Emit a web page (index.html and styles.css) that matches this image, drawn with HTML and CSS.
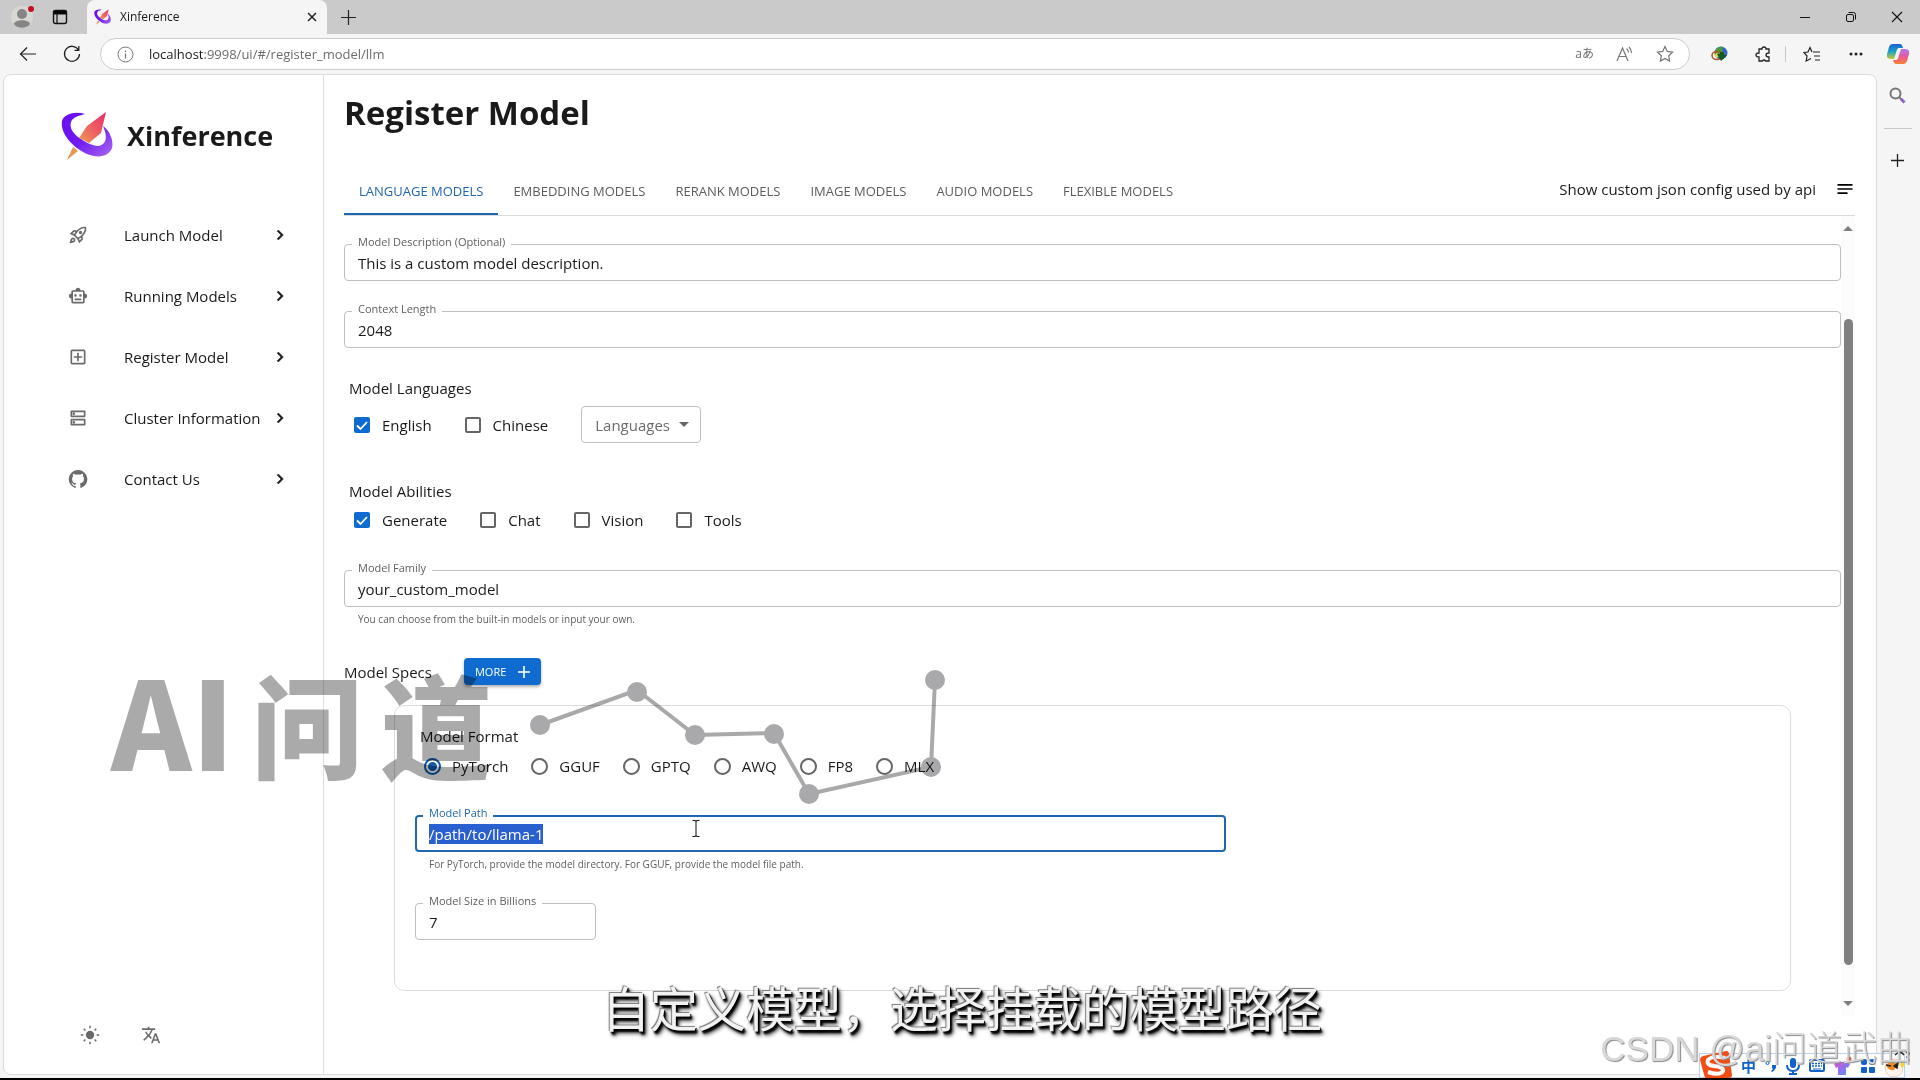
FILE: index.html
```html
<!DOCTYPE html>
<html lang="en">
<head>
<meta charset="utf-8">
<meta name="viewport" content="width=device-width, initial-scale=1">
<title>Xinference</title>
<link rel="stylesheet" href="styles.css">
</head>
<body>
<svg class="defs" width="0" height="0" aria-hidden="true">
  <defs>
    <linearGradient id="ring" x1="0" y1="0" x2="1" y2="1"><stop offset="0" stop-color="#6a0cf0"/><stop offset=".5" stop-color="#6f1af0"/><stop offset="1" stop-color="#a866f0"/></linearGradient>
    <linearGradient id="needle" x1="1" y1="0" x2="0" y2="1"><stop offset="0" stop-color="#e92a68"/><stop offset=".6" stop-color="#ee6a62"/><stop offset="1" stop-color="#eba04c"/></linearGradient>
    <linearGradient id="copA" x1="0" y1="0" x2="0" y2="1"><stop offset="0" stop-color="#1b5fd0"/><stop offset=".5" stop-color="#1ba3c8"/><stop offset="1" stop-color="#c9c92e"/></linearGradient>
    <linearGradient id="copB" x1="0" y1="0" x2="0" y2="1"><stop offset="0" stop-color="#b07af0"/><stop offset=".5" stop-color="#e85a9c"/><stop offset="1" stop-color="#f8812c"/></linearGradient>
    <linearGradient id="shirt" x1="0" y1="0" x2="1" y2="1"><stop offset="0" stop-color="#e458b4"/><stop offset=".5" stop-color="#9a6cf0"/><stop offset="1" stop-color="#4aa0f8"/></linearGradient>
    <symbol id="logo" viewBox="0 0 52 48">
      <path d="M24 2C14-1 3 2 1 9c-2 12 10 26 25 33 12 5 22 2 25-6 2-8-3-18-9-22 3 7 4 13 1 17-4 5-12 3-20-2C13 23 8 17 10 10c2-5 7-6 14-8z" fill="url(#ring)"/>
      <path d="M45 0 40 21 28 31 18 26 26 14z" fill="url(#needle)"/>
      <path d="M12 35l5 4-11 9z" fill="#e69a50"/>
    </symbol>
    <symbol id="chev" viewBox="0 0 24 24"><path fill="currentColor" stroke="currentColor" stroke-width=".6" d="M10 6 8.59 7.41 13.17 12l-4.58 4.59L10 18l6-6z"/></symbol>
  </defs>
</svg>

<header class="tabstrip">
  <svg class="avatar" viewBox="0 0 24 24" width="24" height="24" aria-hidden="true"><circle cx="11" cy="12" r="11" fill="#d9d7d3"/><circle cx="11" cy="9" r="5" fill="#858585"/><path d="M3 19c1-5 15-5 16 0-3 5-13 5-16 0z" fill="#858585"/><circle cx="20" cy="4" r="3" fill="#c50f1f"/></svg>
  <svg class="workspaces" viewBox="0 0 16 16" width="16" height="16" aria-hidden="true"><rect x="1.5" y="1.5" width="13" height="13" rx="2" fill="none" stroke="#111" stroke-width="1.4"/><path d="M2 2h12v3H2zM5 5v9" stroke="#111" stroke-width="1.2"/></svg>
  <div class="tab">
    <svg width="17" height="16" aria-hidden="true"><use href="#logo"/></svg>
    <span class="tab-name">Xinference</span>
    <button class="plain" aria-label="Close tab"><svg width="10" height="10" viewBox="0 0 10 10"><path d="M1 1l8 8M9 1L1 9" stroke="#222" stroke-width="1.5"/></svg></button>
  </div>
  <button class="plain newtab" aria-label="New tab"><svg width="15" height="15" viewBox="0 0 15 15"><path d="M7.5 0v15M0 7.5h15" stroke="#222" stroke-width="1.2"/></svg></button>
  <div class="winbtns">
    <button class="plain" aria-label="Minimize"><svg width="12" height="12" viewBox="0 0 12 12"><path d="M1 6.500h10" stroke="#111"/></svg></button>
    <button class="plain" aria-label="Restore"><svg width="12" height="12" viewBox="0 0 12 12" fill="none" stroke="#111"><rect x="1.500" y="3.500" width="7" height="7" rx="1.500"/><path d="M3.500 1.500h5a2 2 0 0 1 2 2v5"/></svg></button>
    <button class="plain" aria-label="Close"><svg width="12" height="12" viewBox="0 0 12 12"><path d="M1 1l10 10M11 1L1 11" stroke="#111" stroke-width="1.1"/></svg></button>
  </div>
</header>

<div class="toolbar">
  <button class="plain" aria-label="Back"><svg width="18" height="16" viewBox="0 0 18 16" fill="none" stroke="#222" stroke-width="1.2"><path d="M17 8H1.500M8 1.500L1.500 8 8 14.500"/></svg></button>
  <button class="plain" aria-label="Refresh"><svg width="18" height="18" viewBox="0 0 18 18" fill="none" stroke="#222" stroke-width="1.300"><path d="M15.500 5A7.500 7.500 0 1 0 16.500 9M15.800 1v4.300h-4.300"/></svg></button>
  <div class="address">
    <svg width="17" height="17" viewBox="0 0 17 17" fill="none" stroke="#757575" aria-hidden="true"><circle cx="8.500" cy="8.500" r="7.500"/><path d="M8.500 7.500v5M8.500 4.500v1.500" stroke-width="1.200"/></svg>
    <span class="url"><b>localhost</b>:9998/ui/#/register_model/llm</span>
    <span class="translate-ico">aあ</span>
    <svg class="read" width="18" height="16" viewBox="0 0 18 16" fill="none" stroke="#757575" stroke-width="1.200" aria-hidden="true"><path d="M1 15L6.500 2 12 15M3 10.500h7M10.500 2.500a6 6 0 0 1 2 4M13 1a8 8 0 0 1 2.500 6"/></svg>
    <svg width="18" height="18" viewBox="0 0 18 18" fill="none" stroke="#757575" stroke-width="1.200" aria-hidden="true"><path d="M9 1.500l2.300 4.900 5.200.7-3.800 3.700.9 5.300L9 13.500l-4.600 2.600.9-5.300L1.500 7.100l5.200-.7z"/></svg>
  </div>
  <div class="tools">
    <svg width="17" height="16" viewBox="0 0 17 16" aria-hidden="true"><circle cx="10" cy="7" r="6.500" fill="#3468c0"/><path d="M4 5q2-5 8-4l-1 4 3 2-3 3-7-1z" fill="#4a9b3c"/><ellipse cx="6" cy="9.500" rx="5" ry="4" fill="none" stroke="#b95022" stroke-width="1.500"/><path d="M3 9l3-2 3 2-3 3z" fill="#e5d64a"/><path d="M6 8h3V6h4v3h3l-6 6z" fill="#145a20"/></svg>
    <svg width="16" height="17" viewBox="0 0 16 17" fill="none" stroke="#222" stroke-width="1.300" aria-hidden="true"><path d="M4 3h3q0-2 2-2t2 2h3v4q-3 0-3 2t3 2v4h-3.500q-.5-1-1.500-1t-1.500 1H4v-4Q1 11 1 9t3-2z"/></svg>
    <span class="vline"></span>
    <svg width="17" height="17" viewBox="0 0 17 17" fill="none" stroke="#222" stroke-width="1.200" aria-hidden="true"><path d="M10 6h7M11 10h6M12 14h5M9 6L7 1.500 5 6 1 6.500l3 3.500-.8 5L8 12.500"/></svg>
    <svg width="14" height="4" viewBox="0 0 14 4" fill="#222" aria-hidden="true"><circle cx="2" cy="2" r="1.500"/><circle cx="7" cy="2" r="1.500"/><circle cx="12" cy="2" r="1.500"/></svg>
    <svg width="22" height="20" viewBox="0 0 22 20" aria-hidden="true"><path d="M6 0h7q2 0 3 4l-4 0q-2 0-3 5l-2 6H4q-5 0-4-5L2 3q1-3 4-3z" fill="url(#copA)"/><path d="M16 20H9q-2 0-3-4l3 0q2 0 3-5l2-6h4q5 0 4 5l-2 7q-1 3-4 3z" fill="url(#copB)"/></svg>
  </div>
</div>

<div class="body">
  <div class="page">
    <nav class="sidebar" aria-label="Main">
      <a class="brand" href="#"><svg width="52" height="48" aria-hidden="true"><use href="#logo"/></svg><span>Xinference</span></a>
      <ul class="menu">
        <li><a href="#launch"><svg class="ico" viewBox="0 0 24 24"><path d="M6 15c-.83 0-1.58.34-2.120.88C2.700 17.060 2 22 2 22s4.940-.7 6.120-1.880A2.996 2.996 0 0 0 6 15zm.71 3.710c-.28.28-2.170.76-2.170.76s.47-1.880.76-2.170c.17-.19.42-.3.7-.3.55 0 1 .45 1 1 0 .28-.11.53-.29.71zm10.710-5.060c6.360-6.360 4.240-11.310 4.240-11.310S16.710.22 10.350 6.580l-2.490-.5c-.65-.13-1.330.08-1.810.55L2 10.690l5 2.140L11.170 17l2.140 5 4.050-4.050c.47-.47.68-1.150.55-1.810l-.49-2.490zM7.410 10.830l-1.910-.82 1.970-1.970 1.440.29c-.57.83-1.080 1.700-1.500 2.500zm6.580 7.670-.82-1.910c.8-.42 1.670-.93 2.490-1.500l.29 1.440-1.960 1.970zM16 12.240c-1.320 1.320-3.380 2.400-4.040 2.730l-2.930-2.930c.32-.65 1.400-2.710 2.730-4.040 4.680-4.680 8.230-3.990 8.230-3.990s.69 3.550-3.990 8.230zM15 11c1.100 0 2-.9 2-2s-.9-2-2-2-2 .9-2 2 .9 2 2 2z"/></svg><span>Launch Model</span><svg class="chev"><use href="#chev"/></svg></a></li>
        <li><a href="#running"><svg class="ico" viewBox="0 0 24 24"><path d="M20 9V7c0-1.100-.9-2-2-2h-3c0-1.660-1.340-3-3-3S9 3.340 9 5H6c-1.100 0-2 .9-2 2v2c-1.660 0-3 1.340-3 3s1.340 3 3 3v4c0 1.100.9 2 2 2h12c1.100 0 2-.9 2-2v-4c1.660 0 3-1.340 3-3s-1.340-3-3-3zm-2 10H6V7h12v12zm-9-6c-.83 0-1.500-.67-1.500-1.500S8.170 10 9 10s1.500.67 1.500 1.500S9.830 13 9 13zm7.500-1.500c0 .83-.67 1.500-1.500 1.500s-1.500-.67-1.500-1.500.67-1.500 1.500-1.500 1.500.67 1.500 1.500zM8 15h8v2H8v-2z"/></svg><span>Running Models</span><svg class="chev"><use href="#chev"/></svg></a></li>
        <li><a href="#register"><svg class="ico" viewBox="0 0 24 24"><path d="M19 3H5c-1.110 0-2 .9-2 2v14c0 1.100.89 2 2 2h14c1.100 0 2-.9 2-2V5c0-1.100-.9-2-2-2zm0 16H5V5h14v14zm-8-2h2v-4h4v-2h-4V7h-2v4H7v2h4z"/></svg><span>Register Model</span><svg class="chev"><use href="#chev"/></svg></a></li>
        <li><a href="#cluster"><svg class="ico" viewBox="0 0 24 24"><path d="M19 15v4H5v-4h14m1-2H4c-.55 0-1 .45-1 1v6c0 .55.45 1 1 1h16c.55 0 1-.45 1-1v-6c0-.55-.45-1-1-1zM7 18.500c-.82 0-1.500-.67-1.500-1.500s.68-1.500 1.500-1.500 1.500.67 1.500 1.500-.67 1.500-1.500 1.500zM19 5v4H5V5h14m1-2H4c-.55 0-1 .45-1 1v6c0 .55.45 1 1 1h16c.55 0 1-.45 1-1V4c0-.55-.45-1-1-1zM7 8.500c-.82 0-1.500-.67-1.500-1.500S6.180 5.500 7 5.500s1.500.68 1.500 1.500S7.830 8.500 7 8.500z"/></svg><span>Cluster Information</span><svg class="chev"><use href="#chev"/></svg></a></li>
        <li><a href="#contact"><svg class="ico" viewBox="0 0 24 24"><path d="M12 1.270a11 11 0 00-3.480 21.460c.55.09.73-.28.73-.55v-1.840c-3.030.64-3.670-1.460-3.670-1.460-.55-1.290-1.280-1.650-1.280-1.650-.92-.65.1-.65.1-.65 1.100 0 1.730 1.100 1.730 1.100.92 1.650 2.570 1.200 3.210.92a2 2 0 01.64-1.470c-2.470-.27-5.040-1.190-5.040-5.500 0-1.100.46-2.100 1.200-2.840a3.760 3.760 0 010-2.930s.91-.28 3.110 1.100c1.800-.49 3.700-.49 5.500 0 2.100-1.380 3.020-1.100 3.020-1.100a3.760 3.760 0 01.1 2.930c.83.74 1.200 1.740 1.200 2.940 0 4.210-2.570 5.130-5.040 5.400.45.37.82.92.82 2.020v3.030c0 .27.1.64.73.55A11 11 0 0012 1.270"/></svg><span>Contact Us</span><svg class="chev"><use href="#chev"/></svg></a></li>
      </ul>
      <div class="prefs">
        <button class="plain" aria-label="Theme"><svg class="ico" viewBox="0 0 24 24"><circle cx="12" cy="12" r="5"/><path d="M12 1v3M12 20v3M1 12h3M20 12h3M4.500 4.500l2 2M17.500 17.500l2 2M4.500 19.500l2-2M17.500 6.500l2-2" stroke="#6b6b6b" stroke-width="1.800"/></svg></button>
        <button class="plain" aria-label="Language"><svg class="ico" viewBox="0 0 24 24"><path d="M12.870 15.070l-2.540-2.510.03-.03c1.740-1.940 2.980-4.170 3.710-6.530H17V4h-7V2H8v2H1v1.990h11.170C11.500 7.920 10.440 9.750 9 11.350 8.070 10.320 7.300 9.190 6.690 8h-2c.73 1.630 1.730 3.170 2.980 4.560l-5.090 5.020L4 19l5-5 3.110 3.110.76-2.040zM18.500 10h-2L12 22h2l1.120-3h4.750L21 22h2l-4.500-12zm-2.620 7l1.620-4.330L19.120 17h-3.240z"/></svg></button>
      </div>
    </nav>

    <main class="main">
      <h1>Register Model</h1>
      <div class="tabs" role="tablist">
        <button role="tab" aria-selected="true" class="mtab active">Language Models</button>
        <button role="tab" class="mtab">Embedding Models</button>
        <button role="tab" class="mtab">Rerank Models</button>
        <button role="tab" class="mtab">Image Models</button>
        <button role="tab" class="mtab">Audio Models</button>
        <button role="tab" class="mtab">Flexible Models</button>
        <button class="plain json">Show custom json config used by api <svg width="20" height="20" viewBox="0 0 24 24"><path d="M21 11.010 3 11v2h18zM3 16h12v2H3zM21 6H3v2.010L21 8z"/></svg></button>
      </div>
      <div class="scroller">
        <form class="form">
          <div class="field"><label for="desc">Model Description (Optional)</label><input id="desc" value="This is a custom model description."></div>
          <div class="field context"><label for="ctx">Context Length</label><input id="ctx" value="2048"></div>

          <h2 class="group languages">Model Languages</h2>
          <div class="checks tall">
            <label><input type="checkbox" checked>English</label>
            <label><input type="checkbox">Chinese</label>
            <select aria-label="Languages"><option>Languages</option></select>
          </div>

          <h2 class="group abilities">Model Abilities</h2>
          <div class="checks">
            <label><input type="checkbox" checked>Generate</label>
            <label><input type="checkbox">Chat</label>
            <label><input type="checkbox">Vision</label>
            <label><input type="checkbox">Tools</label>
          </div>

          <div class="field family"><label for="fam">Model Family</label><input id="fam" value="your_custom_model"></div>
          <p class="help">You can choose from the built-in models or input your own.</p>

          <div class="specs">
            <h2>Model Specs</h2>
            <button type="button" class="more">MORE <svg width="12" height="12" viewBox="0 0 12 12"><path d="M6 0v12M0 6h12" stroke="#fff" stroke-width="1.600"/></svg></button>
          </div>

          <div class="card">
            <h2 id="fmt">Model Format</h2>
            <div class="radios" role="radiogroup" aria-labelledby="fmt">
              <label><input type="radio" name="format" checked>PyTorch</label>
              <label><input type="radio" name="format">GGUF</label>
              <label><input type="radio" name="format">GPTQ</label>
              <label><input type="radio" name="format">AWQ</label>
              <label><input type="radio" name="format">FP8</label>
              <label><input type="radio" name="format">MLX</label>
            </div>
            <div class="field path"><label for="path">Model Path</label><input id="path" value="/path/to/llama-1" autofocus></div>
            <p class="help">For PyTorch, provide the model directory. For GGUF, provide the model file path.</p>
            <div class="field size"><label for="size">Model Size in Billions</label><input id="size" value="7"></div>
          </div>
        </form>
        <div class="bar" aria-hidden="true"><i class="up"></i><i class="thumb"></i><i class="down"></i></div>
      </div>
    </main>
  </div>
  <aside class="rail">
    <svg width="17" height="17" viewBox="0 0 17 17" fill="none" aria-hidden="true"><circle cx="6.500" cy="6.500" r="5" stroke="#757575" stroke-width="2"/><path d="M10.500 10.500l2 2" stroke="#757575" stroke-width="2"/><path d="M12 12l3.500 3.500" stroke="#9460d0" stroke-width="3"/></svg>
    <span class="rule"></span>
    <svg width="13" height="13" viewBox="0 0 13 13" aria-hidden="true"><path d="M6.500 0v13M0 6.500h13" stroke="#222" stroke-width="1.300"/></svg>
  </aside>
</div>

<div class="wm" lang="zh"><span class="latin">AI</span><span>问</span><span>道</span></div>
<svg class="graph" viewBox="0 0 420 136" width="420" height="136" aria-hidden="true">
  <g fill="#a9a9ab" stroke="#a9a9ab">
  <path d="M15 55L112 20 170 65 249 63 284 124 406 97 410 10" fill="none" stroke-width="4"/>
  <g stroke="none"><circle cx="15" cy="55" r="10"/><circle cx="112" cy="22" r="10"/><circle cx="170" cy="65" r="10"/><circle cx="249" cy="64" r="10"/><circle cx="284" cy="124" r="10"/><circle cx="406" cy="97" r="10"/><circle cx="410" cy="10" r="10"/></g></g>
</svg>
<svg class="caret" width="8" height="17" viewBox="0 0 8 17" fill="none" stroke="#111" aria-hidden="true"><path d="M.5.5h2.500q1 0 1 1 0-1 1-1h2.500M4 1v15M.5 16.500h2.500q1 0 1-1 0 1 1 1h2.500"/></svg>
<p class="caption" lang="zh">自定义模型，选择挂载的模型路径</p>

<div class="ime" lang="zh">
  <svg width="32" height="30" viewBox="0 0 32 30" aria-hidden="true"><path d="M3 5L26 0q3 0 3 3l3 21q0 3-3 3L9 30q-3 0-4-3L0 9q0-3 3-4z" fill="#f04e16"/><path d="M25 7Q12 4 8 9q-2 5 6 6 10 1 9 5-3 5-15 1" fill="none" stroke="#fff" stroke-width="4"/></svg>
  <b>中</b>
  <svg width="12" height="14" viewBox="0 0 12 14" fill="#0f62c8" aria-hidden="true"><circle cx="2.500" cy="4" r="1.500" fill="none" stroke="#0f62c8"/><path d="M7 6h4q1 4-4 7l-1-1q3-2 1-3z"/></svg>
  <svg width="14" height="18" viewBox="0 0 14 18" fill="none" stroke="#0f62c8" stroke-width="2" aria-hidden="true"><rect x="4" y="1" width="6" height="10" rx="3" fill="#0f62c8" stroke="none"/><path d="M1 8q0 6 6 6t6-6M7 14v3M3 17h8"/></svg>
  <svg width="16" height="13" viewBox="0 0 16 13" aria-hidden="true"><rect x="1" y="1" width="14" height="11" rx="1" fill="none" stroke="#0f62c8" stroke-width="2"/><path d="M3 4.500h10M3 7h10" stroke="#0f62c8" stroke-width="1.500" stroke-dasharray="2 1"/><path d="M4 10h8" stroke="#0f62c8"/></svg>
  <svg width="18" height="19" viewBox="0 0 18 19" aria-hidden="true"><path d="M5 5q3 2 6 0l5 3-2 4-2-1v8H4v-8l-2 1-2-4z" fill="url(#shirt)"/><circle cx="15" cy="3" r="2.500" fill="#f25a4a"/></svg>
  <svg width="14" height="14" viewBox="0 0 14 14" fill="#0f62c8" aria-hidden="true"><rect width="6" height="6" rx="2"/><circle cx="11" cy="3" r="3"/><rect y="8" width="6" height="6" rx="1"/><rect x="8" y="8" width="6" height="6" rx="1"/></svg>
  <svg class="fox" width="26" height="28" viewBox="0 0 26 28" aria-hidden="true"><circle cx="10" cy="18" r="9" fill="#fff5ee" stroke="#efc9bb"/><path d="M2 15q4-5 12-1l-4 6q-6 1-8-5z" fill="#ef8a20"/><path d="M2 15l5 1M10 16l4-3-1 5z" stroke="#222" stroke-width="1.500" fill="#222"/><path d="M18 11l3 4-3 3-2-3z" fill="#f4d33a"/><path d="M11 5l4-3 3 1 2 2M22 3q3-2 3 1l-2 3 2 4" fill="none" stroke="#222" stroke-width="1.500"/></svg>
</div>
<p class="csdn" lang="zh">CSDN @ai问道武曲</p>
<script src="main.js"></script>
</body>
</html>
```
FILE: styles.css
```css
* { box-sizing: border-box; }
body {
  margin: 0;
  min-height: 100vh;
  display: flex;
  flex-direction: column;
  position: relative;
  overflow: hidden;
  background: #f5f5f5;
  border-bottom: 2px solid #000;
  color: #1a1a1a;
  font-family: "Open Sans", "Noto Sans CJK SC", sans-serif;
  font-size: 15px;
  line-height: 20px;
}
.defs { position: absolute; }
svg { display: block; flex: none; }
h1, h2, p, ul { margin: 0; padding: 0; font-weight: 400; }
h2 { font-size: 15px; line-height: 20px; }
button, input, select { font: inherit; color: inherit; margin: 0; }
.plain { border: 0; padding: 0; background: none; display: flex; align-items: center; justify-content: center; }
a { color: inherit; text-decoration: none; }

/* Browser chrome */
.tabstrip { height: 34px; background: #cacaca; display: flex; align-items: center; }
.avatar { margin-left: 11px; }
.workspaces { margin-left: 17px; }
.tab { align-self: stretch; width: 240px; margin-left: 19px; padding: 0 10px 0 7px; display: flex; align-items: center; gap: 9px; background: #f5f5f5; border-radius: 8px 8px 0 0; font-size: 12px; }
.tab-name { flex: 1; }
.newtab { margin-left: 14px; }
.winbtns { margin-left: auto; padding-right: 17px; display: flex; gap: 34px; }
.toolbar { height: 40px; display: flex; align-items: center; padding: 0 11px 0 19px; }
.toolbar > .plain:nth-child(2) { margin: 0 19px 0 26px; }
.address { flex: 1; height: 32px; display: flex; align-items: center; padding: 0 15px 0 16px; background: #fff; border: 1px solid #cdcdcd; border-radius: 16px; }
.url { flex: 1; margin-left: 15px; color: #6c6c6c; font-size: 13px; }
.url b { color: #1a1a1a; font-weight: 400; }
.translate-ico { color: #6c6c6c; font-size: 12px; }
.read { margin: 0 22px 0 22px; }
.tools { display: flex; align-items: center; margin-left: 21px; }
.tools > :nth-child(2) { margin-left: 27px; }
.tools > :nth-child(3) { margin: 0 17px 0 14px; }
.tools > :nth-child(5) { margin: 0 24px 0 29px; }
.vline { width: 1px; height: 16px; background: #c8c8c8; }
.body { flex: 1; display: flex; padding: 0 0 3px 3px; }
.page { flex: 1; min-width: 0; display: flex; background: #fff; border: 1px solid #dcdcdc; border-radius: 8px; }
.rail { width: 43px; display: flex; flex-direction: column; align-items: center; padding: 13px 2px 0 0; }
.rule { width: 28px; height: 1px; margin: 24px 0 25px; background: #c8c8c8; }

/* Sidebar */
.sidebar { width: 320px; border-right: 1px solid #dedede; display: flex; flex-direction: column; padding: 37px 33px 29px 57px; }
.brand { display: flex; align-items: center; gap: 14px; font-size: 27px; font-weight: 700; line-height: 48px; }
.menu { list-style: none; margin-top: 44px; }
.menu a { display: flex; align-items: center; height: 61px; padding-left: 7px; }
.ico { width: 20px; height: 20px; fill: #6b6b6b; }
.menu span { flex: 1; margin-left: 36px; white-space: nowrap; }
.chev { width: 20px; height: 20px; }
.prefs { display: flex; gap: 41px; margin-top: auto; padding-left: 19px; }

/* Main column */
.main { flex: 1; min-width: 0; display: flex; flex-direction: column; padding: 18px 21px 58px 20px; }
h1 { font-size: 33px; line-height: 40px; font-weight: 700; }
.tabs { display: flex; margin-top: 34px; border-bottom: 1px solid #dcdcdc; }
.mtab { border: 0; border-bottom: 2px solid transparent; background: none; height: 48px; padding: 2px 15px 0; font-size: 13px; text-transform: uppercase; color: #5c5c5c; white-space: nowrap; }
.mtab.active { color: #1f67b0; border-color: #1f67b0; }
.json { margin-left: auto; gap: 19px; padding-bottom: 5px; }
.scroller { flex: 1; display: flex; }
.form { flex: 1; min-width: 0; padding: 28px 0 24px; }
.field { position: relative; }
.field label { position: absolute; left: 8px; top: -10px; padding: 0 6px; background: #fff; color: #606060; font-size: 11px; line-height: 16px; }
.field input { display: block; width: 100%; height: 37px; padding: 0 13px; border: 1px solid #bfbfbf; border-radius: 4px; background: none; outline: 0; }
.context { margin-top: 30px; }
.group { padding-left: 5px; }
.languages { margin-top: 30px; }
.abilities { margin-top: 38px; }
.checks { display: flex; align-items: center; gap: 33px; height: 24px; margin-top: 7px; padding-left: 10px; }
.checks.tall { height: 37px; margin-top: 8px; }
.checks label { display: flex; align-items: center; gap: 12px; }
.checks input { appearance: none; width: 16px; height: 16px; border: 2px solid #666; border-radius: 2px; }
.checks input:checked { border: 0; background: #0f6bcf url("data:image/svg+xml,%3Csvg xmlns='http://www.w3.org/2000/svg' viewBox='0 0 16 16'%3E%3Cpath d='M3 8.500l3.500 3.500L13 5' fill='none' stroke='white' stroke-width='1.800'/%3E%3C/svg%3E"); }
.checks select { appearance: none; width: 120px; height: 37px; padding: 0 13px; border: 1px solid #bfbfbf; border-radius: 4px; color: #6b6b6b; background: #fff url("data:image/svg+xml,%3Csvg xmlns='http://www.w3.org/2000/svg' viewBox='0 0 10 5'%3E%3Cpath d='M0 0h10L5 5z' fill='%23666'/%3E%3C/svg%3E") no-repeat right 11px center / 10px 5px; }
.family { margin-top: 38px; }
.help { margin-top: 4px; padding-left: 14px; color: #606060; font-size: 10px; line-height: 16px; }
.specs { display: flex; align-items: center; gap: 32px; margin-top: 31px; }
.more { display: flex; align-items: center; justify-content: space-between; width: 77px; height: 27px; padding: 0 11px; border: 0; border-radius: 4px; background: #0f6bcf; color: #fff; font-size: 11px; box-shadow: 0 2px 3px rgba(0, 0, 0, .3); }
.card { margin: 20px 50px 0 50px; padding: 20px 24px 50px 20px; border: 1px solid #dcdcdc; border-radius: 10px; }
.card h2 { padding-left: 5px; }
.radios { display: flex; align-items: center; gap: 23px; height: 24px; margin-top: 8px; padding-left: 9px; }
.radios label { display: flex; align-items: center; gap: 11px; }
.radios input { appearance: none; width: 17px; height: 17px; border: 2px solid #666; border-radius: 50%; }
.radios input:checked { border-color: #0f5bb0; background: radial-gradient(circle, #0f5bb0 4px, transparent 5px); }
.path { width: 60%; margin-top: 37px; }
.path input { border: 2px solid #1f67b0; padding: 0 12px; }
.path label { color: #1f67b0; }
.path input::selection { background: #2a5fd0; color: #fff; }
.size { width: 181px; margin-top: 31px; }
.bar { width: 14px; display: flex; flex-direction: column; align-items: center; background: #fbfbfb; padding: 10px 0; }
.up, .down { border: 5px solid transparent; }
.up { border-top: 0; border-bottom-color: #808080; }
.down { border-bottom: 0; border-top-color: #808080; }
.thumb { width: 9px; flex: 1; margin: 88px 0 36px; border-radius: 5px; background: #808080; }

/* Overlays */
.wm { position: absolute; left: 111px; top: 662px; display: flex; align-items: baseline; gap: 17px; opacity: .33; color: #000; font: 900 112px/112px "Noto Sans CJK SC", sans-serif; pointer-events: none; }
.latin { font-size: 122px; }
.graph { position: absolute; left: 525px; top: 670px; overflow: visible; mix-blend-mode: multiply; pointer-events: none; }
.caret { position: absolute; left: 692px; top: 820px; }
.caption { position: absolute; left: 0; right: 0; top: 976px; padding-left: 4px; text-align: center; color: #f2f2f2; font: 400 48px/60px "Noto Sans CJK SC", sans-serif; text-shadow: -1px -1px 1px #777, 1px 1px 1px #000, 2px 3px 2px #000, 3px 4px 4px #222; }
.ime { position: absolute; right: 15px; bottom: 0; display: flex; align-items: center; gap: 9px; height: 25px; background: #fff; border: 1px solid #b9d3ec; }
.ime b { color: #0f62c8; font-size: 15px; }
.fox { margin: -4px -6px 0 0; }
.csdn { position: absolute; right: 8px; bottom: 5px; color: #d8d8d8; font: 300 35px/48px "Liberation Sans", "Noto Sans CJK SC", sans-serif; text-shadow: 1px 1px 1px #888; }
```
FILE: main.js
```js
const path = document.getElementById("path");
path.focus();
path.select();
```
